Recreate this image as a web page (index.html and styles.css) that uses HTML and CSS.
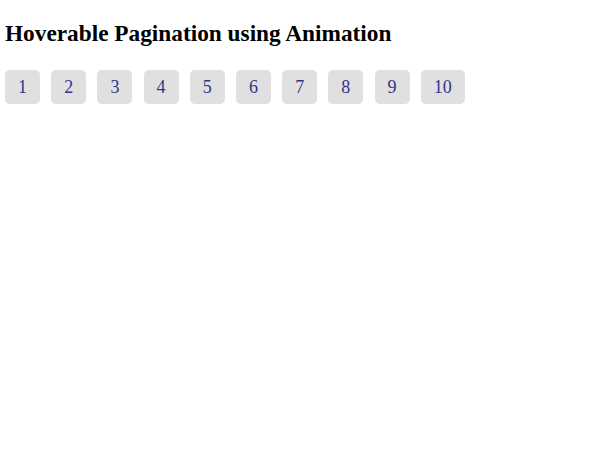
FILE: index.html
```html
<!DOCTYPE html>
<html lang="en">
<head>
    <meta charset="UTF-8">
    <meta name="viewport" content="width=device-width, initial-scale=1.0">
    <title>Hoverable Pagination using Animation</title>
    <link rel="stylesheet" href="styles.css">
</head>
<body>
    <h2 class="title">Hoverable Pagination using Animation</h2>
    <div class="pagination">
        <a href="#">1</a>
        <a href="#">2</a>
        <a href="#">3</a>
        <a href="#">4</a>
        <a href="#">5</a>
        <a href="#">6</a>
        <a href="#">7</a>
        <a href="#">8</a>
        <a href="#">9</a>
        <a href="#">10</a>
    </div>
</body>
</html>
```
FILE: styles.css
```css
body {
    margin: 0;
    padding: 5px;
    font-family: "Liberation Serif", serif;
}

.title {
    font-size: 23.3px;
    line-height: 27px;
    margin: 15px 0 23px 0;
}

.pagination {
    display: flex;
    gap: 11.2px;
}

.pagination a {
    display: block;
    min-width: 9px;
    padding: 7px 13px;
    font-size: 18px;
    line-height: 20px;
    color: #33338a;
    text-decoration: none;
    text-align: center;
    background-color: #e0e0e0;
    border-radius: 5px;
    transition: background-color .3s;
}

.pagination a:hover {
    background-color: #4caf50;
    color: white;
}
```
